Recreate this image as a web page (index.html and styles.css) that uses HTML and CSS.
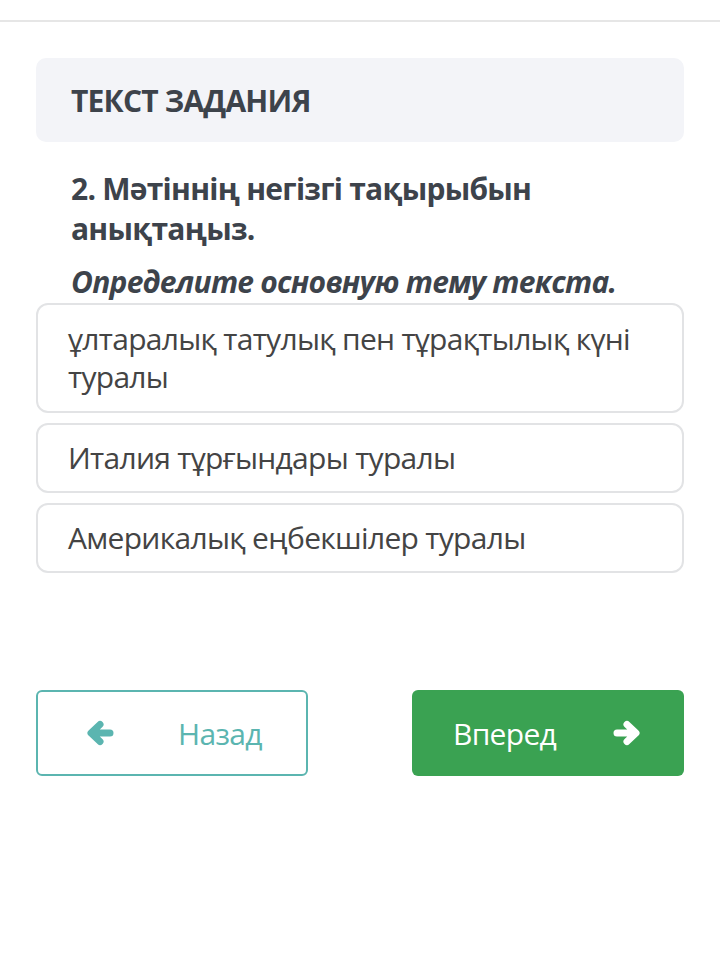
FILE: index.html
```html
<!DOCTYPE html>
<html lang="kk">
<head>
<meta charset="utf-8">
<title>Тапсырма</title>
<link rel="stylesheet" href="styles.css">
</head>
<body>
<div class="topbar"></div>
<main class="page">
  <div class="task-head">ТЕКСТ ЗАДАНИЯ</div>
  <div class="question">
    <p class="q-kz">2. Мәтіннің негізгі тақырыбын анықтаңыз.</p>
    <p class="q-ru">Определите основную тему текста.</p>
  </div>
  <div class="options">
    <div class="option">ұлтаралық татулық пен тұрақтылық күні туралы</div>
    <div class="option">Италия тұрғындары туралы</div>
    <div class="option">Америкалық еңбекшілер туралы</div>
  </div>
  <div class="nav">
    <button class="btn btn-back">
      <svg class="arrow" viewBox="0 0 28 26" width="28" height="26"><path d="M24 13H6M14 4.5L5 13l9 8.5"/></svg>
      <span>Назад</span>
    </button>
    <button class="btn btn-next">
      <span>Вперед</span>
      <svg class="arrow" viewBox="0 0 28 26" width="28" height="26"><path d="M4 13h18M14 4.5l9 8.5-9 8.5"/></svg>
    </button>
  </div>
</main>
</body>
</html>
```

FILE: styles.css
```css
* { box-sizing: border-box; }
html, body { margin: 0; padding: 0; background: #fff; }
body {
  font-family: "Open Sans", "Noto Sans", "Liberation Sans", sans-serif;
  color: #3d434b;
}
.topbar {
  height: 22px;
  border-bottom: 2px solid #e6e6e6;
}
.page {
  padding: 36px 36px 0;
}
.task-head {
  background: #f3f4f8;
  border-radius: 10px;
  height: 84px;
  padding: 0 35px;
  display: flex;
  align-items: center;
  font-weight: 700;
  font-size: 30px;
  letter-spacing: -0.8px;
}
.question {
  padding: 27px 35px 0;
}
.question p { margin: 0; }
.q-kz {
  font-weight: 700;
  font-size: 30px;
  line-height: 40px;
  letter-spacing: -0.75px;
}
.q-ru {
  margin-top: 13px !important;
  font-weight: 700;
  font-style: italic;
  font-size: 30px;
  line-height: 40px;
  letter-spacing: -0.75px;
}
.options {
  display: flex;
  flex-direction: column;
  gap: 10px;
  margin-top: 1px;
}
.option {
  border: 2px solid #e2e3e5;
  border-radius: 12px;
  padding: 14px 30px;
  font-size: 30px;
  line-height: 38px;
  letter-spacing: -0.7px;
  color: #444;
}
.option:first-child {
  padding: 15px 30px;
}
.nav {
  display: flex;
  justify-content: space-between;
  margin-top: 117px;
}
.btn {
  width: 272px;
  height: 86px;
  border-radius: 6px;
  font-family: inherit;
  font-size: 30px;
  letter-spacing: -0.7px;
  display: flex;
  align-items: center;
  cursor: pointer;
}
.arrow {
  fill: none;
  stroke-width: 7;
  stroke-linecap: round;
  stroke-linejoin: round;
}
.btn-back {
  background: #fff;
  border: 2px solid #5bb5b0;
  color: #5bb5b0;
  padding: 0 0 0 48px;
  gap: 64px;
}
.btn-back .arrow { stroke: #5bb5b0; }
.btn-next {
  background: #3aa252;
  border: none;
  color: #fff;
  padding: 0 0 0 41px;
  gap: 57px;
}
.btn-next .arrow { stroke: #fff; }
```
